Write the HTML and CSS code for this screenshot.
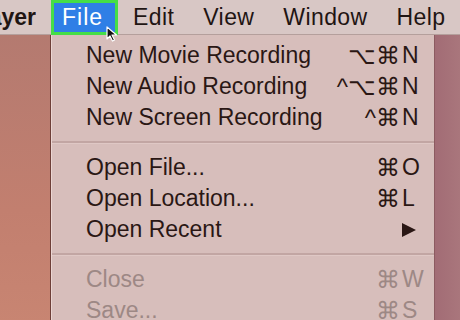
FILE: index.html
```html
<!DOCTYPE html>
<html lang="en">
<head>
<meta charset="UTF-8" />
<meta name="viewport" content="width=device-width, initial-scale=1.0"/>
<title>File menu</title>
<link rel="stylesheet" href="styles.css">
</head>
<body>

<div class="screen">
  <!-- menu bar -->
  <div class="menubar">
    <div class="app-name"><span>QuickTime Player</span></div>
    <div class="bar-item active">File
      <svg class="cursor" width="12" height="16" viewBox="0 0 12 16">
        <path d="M1 1 L1 13 L4 10 L6.5 15 L8.5 14 L6 9 L10.5 9 Z" fill="#111" stroke="#fff" stroke-width="1.2" stroke-linejoin="round"/>
      </svg>
    </div>
    <div class="bar-item">Edit</div>
    <div class="bar-item">View</div>
    <div class="bar-item">Window</div>
    <div class="bar-item">Help</div>
  </div>

  <div class="desk">
    <div class="left-pane"></div>

    <!-- выпадающее меню -->
    <div class="menu">
      <div class="row"><span class="label">New Movie Recording</span><span class="keys"><span class="mods">⌥⌘</span><span class="key">N</span></span></div>
      <div class="row"><span class="label">New Audio Recording</span><span class="keys"><span class="mods">^⌥⌘</span><span class="key">N</span></span></div>
      <div class="row"><span class="label">New Screen Recording</span><span class="keys"><span class="mods">^⌘</span><span class="key">N</span></span></div>
      <div class="sep"></div>
      <div class="row"><span class="label">Open File...</span><span class="keys"><span class="mods">⌘</span><span class="key">O</span></span></div>
      <div class="row"><span class="label">Open Location...</span><span class="keys"><span class="mods">⌘</span><span class="key">L</span></span></div>
      <div class="row"><span class="label">Open Recent</span><span class="keys">
        <svg class="arrow" width="16" height="16" viewBox="0 0 16 16"><path d="M1 1 L15 8 L1 15 Z" fill="#2a1714"/></svg>
      </span></div>
      <div class="sep"></div>
      <div class="row disabled"><span class="label">Close</span><span class="keys"><span class="mods">⌘</span><span class="key">W</span></span></div>
      <div class="row disabled"><span class="label">Save...</span><span class="keys"><span class="mods">⌘</span><span class="key">S</span></span></div>
    </div>

    <div class="right-pane"></div>
  </div>
</div>

</body>
</html>
```

FILE: styles.css
```css
body {
  margin: 0;
  padding: 0;
  font-family: "Liberation Sans", Arial, sans-serif;
  overflow: hidden;
}

.screen {
  width: 460px;
  height: 320px;
  overflow: hidden;
  display: flex;
  flex-direction: column;
}

/* верхняя строка меню */
.menubar {
  height: 34px;
  flex: none;
  display: flex;
  align-items: stretch;
  background: #d8c7c5;
  border-bottom: 1px solid #b49f9c;
  font-size: 23px;
  color: #1f1513;
}

.app-name {
  width: 36px;
  flex: none;
  display: flex;
  justify-content: flex-end;
  align-items: center;
  overflow: hidden;
  font-weight: bold;
  white-space: nowrap;
  margin-right: 15px;
}

.bar-item {
  display: flex;
  align-items: center;
  padding: 0 14px;
  letter-spacing: 0.4px;
  white-space: nowrap;
}

.bar-item + .bar-item {
  margin-left: 1px;
}

.bar-item.active {
  position: relative;
  background: #2f7fe6;
  color: #fff;
  border: 3px solid #45de47;
  height: 35px;
  box-sizing: border-box;
  padding: 0 12px 0 8px;
  letter-spacing: 1px;
}

.cursor {
  position: absolute;
  left: 52px;
  top: 23px;
}

/* область под строкой меню */
.desk {
  flex: 1;
  display: flex;
}

.left-pane {
  width: 50px;
  flex: none;
  background: linear-gradient(180deg, #b47a70 0%, #c27f6f 60%, #c88572 100%);
  border-right: 1px solid #6e3f38;
}

.right-pane {
  flex: 1;
  background: linear-gradient(90deg, #a26c75 0%, #a9767c 100%);
  border-left: 1px solid #8c5a60;
}

/* Выпадающее меню */
.menu {
  width: 382px;
  flex: none;
  background: #d7bebb;
  border-left: 1px solid #ecd6d3;
  padding-top: 5px;
  font-size: 23px;
  color: #2a1714;
}

.row {
  height: 31px;
  display: flex;
  align-items: center;
  padding: 0 11px 0 34px;
  white-space: nowrap;
}

.label {
  flex: 1;
}

.keys {
  display: flex;
  align-items: center;
}

.mods {
  font-size: 24px;
}

.key {
  width: 21px;
  margin-left: 2px;
}

.arrow {
  margin-right: 6px;
}

.row.disabled {
  color: #9d8885;
}

.sep {
  height: 19px;
  display: flex;
  align-items: center;
}

.sep::before {
  content: "";
  display: block;
  width: 100%;
  height: 2px;
  background: #c2a6a3;
  border-bottom: 1px solid #dfc8c5;
}
```
